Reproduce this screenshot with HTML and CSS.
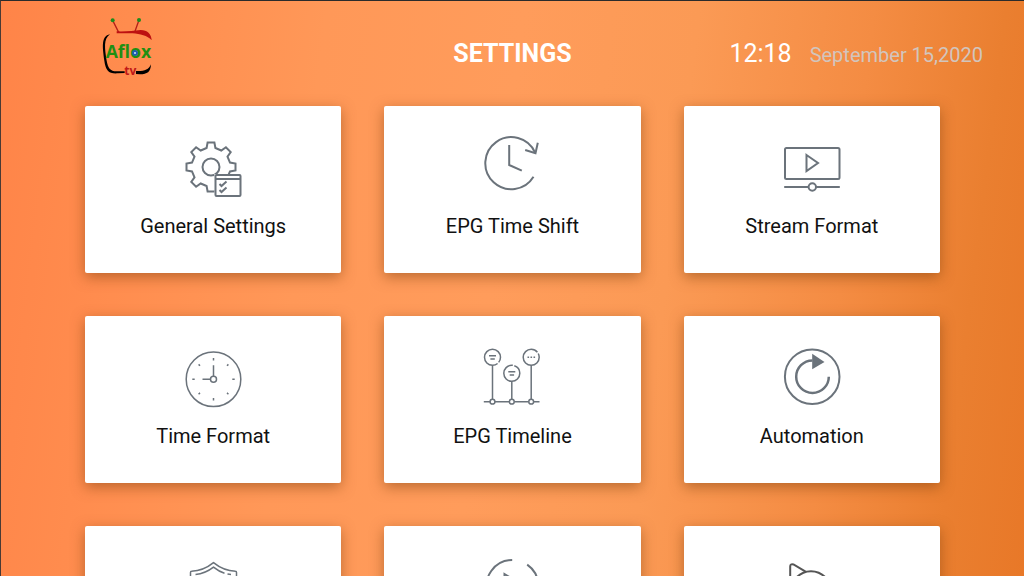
FILE: index.html
```html
<!DOCTYPE html>
<html lang="en">
<head>
    <meta charset="UTF-8">
    <meta name="viewport" content="width=device-width, initial-scale=1.0">
    <title>Settings</title>
    <link rel="stylesheet" href="styles.css">
</head>
<body>
    <header class="header">
        <svg class="logo" viewBox="0 0 240 228" role="img" aria-label="Aflox tv">
            <path d="M68 37L86 73M147 36L135 70" fill="none" stroke="#b5201a" stroke-width="4" />
            <path d="M80 70C110 71 130 68 152 66C172 66 184 78 185 97C172 82 150 78 128 76L80 76Z" fill="#bd1111" />
            <circle cx="68" cy="37" r="6" fill="#1c8c1c" />
            <circle cx="147" cy="36" r="6" fill="#1c8c1c" />
            <path d="M60 79C32 84 38 120 43 158C47 188 56 198 84 196L104 195L104 190L80 190C60 189 54 180 50 158C44 122 40 92 60 79Z" fill="#000" />
            <path d="M138 189C162 190 176 186 183 169C182 192 172 199 150 199L138 198Z" fill="#000" />
            <text class="logo-name" x="47" y="151">Aflox</text>
            <circle cx="135" cy="135" r="9" fill="#1b5fb0" />
            <circle cx="135" cy="135" r="3" fill="#cfe6ff" />
            <text class="logo-tv" x="103" y="202">tv</text>
        </svg>
        <h1 class="title">SETTINGS</h1>
        <div class="clock">
            <span class="time">12:18</span>
            <span class="date">September 15,2020</span>
        </div>
    </header>
    <main class="grid">
        <button class="card" type="button">
            <svg class="icon" viewBox="0 0 60 64">
                <g transform="translate(28 31)">
                    <path d="M-3.4-24.5H3.4L4.4-19 10.3-16.5 14.9-19.7 19.7-14.9 16.5-10.3 19-4.4 24.5-3.4V3.4L19 4.4 16.5 10.3 14.9 19.7 3.4 24.5H-3.4L-4.4 19-10.3 16.5-14.9 19.7-19.7 14.9-16.5 10.3-19 4.4-24.5 3.4V-3.4L-19-4.4-16.5-10.3-19.7-14.9-14.9-19.7-10.3-16.5-4.4-19Z" />
                    <circle r="8.5" />
                    <path class="mask" d="M3.4 7H30V30H3.4Z" />
                    <rect x="4.5" y="8" width="25" height="21" rx="1" />
                    <path d="M4.5 12H29.5" />
                    <path d="M8.5 17l2 2 5-4.5M8.5 23l2 2 5-4.5" />
                </g>
            </svg>
            <span class="label">General Settings</span>
        </button>
        <button class="card" type="button">
            <svg class="icon" viewBox="0 0 60 64">
                <path d="M51.5 40.7A26 26 0 1 1 53 16.5" />
                <path d="M43.2 14L53.5 17.3 55.8 6.7" />
                <path d="M27.2 9V29L39.8 34.7" />
            </svg>
            <span class="label">EPG Time Shift</span>
        </button>
        <button class="card" type="button">
            <svg class="icon" viewBox="0 0 60 64">
                <rect x="3" y="12" width="54.5" height="31" rx="1.5" />
                <path d="M24.5 19L36 27 24.5 35Z" />
                <path d="M2.2 51H26.5M34 51H57.8" />
                <circle cx="30.3" cy="51" r="3.7" />
            </svg>
            <span class="label">Stream Format</span>
        </button>
        <button class="card" type="button">
            <svg class="icon thin" viewBox="0 0 60 64">
                <circle cx="30.5" cy="33.3" r="27.3" />
                <circle cx="30.5" cy="33.3" r="3" />
                <path d="M30.5 30.3V19.3M27.5 33.3H19.5" />
                <path d="M30.5 12v2.4M30.5 52v2.4M9.3 33.3h2.4M49.3 33.3h2.4M15.6 18.4l1.4 1.4M44 19.8l1.4-1.4M15.6 48.2l1.4-1.4M44 46.8l1.4 1.4" />
            </svg>
            <span class="label">Time Format</span>
        </button>
        <button class="card" type="button">
            <svg class="icon thin" viewBox="0 0 60 64">
                <circle cx="10.5" cy="11.3" r="8" stroke-dasharray="48.8 1.5" stroke-dashoffset="-7" />
                <circle cx="29.8" cy="27.3" r="8" stroke-dasharray="48.8 1.5" stroke-dashoffset="-40" />
                <circle cx="49.2" cy="11.3" r="8" stroke-dasharray="48.8 1.5" stroke-dashoffset="-46" />
                <path d="M10.5 19.3V53.2M29.8 35.3V53.2M49.2 19.3V53.2" />
                <path d="M1.8 55.7H8M13 55.7H27.3M32.3 55.7H46.7M51.7 55.7H57.5" />
                <circle cx="10.5" cy="55.7" r="2.4" />
                <circle cx="29.8" cy="55.7" r="2.4" />
                <circle cx="49.2" cy="55.7" r="2.4" />
                <path d="M7 9.7H14M8.4 13H12.8M26.3 25.7H33.3M27.7 29H32.1" />
                <path d="M45.5 11.3h1.6M48.5 11.3h1.6M51.5 11.3h1.6" />
            </svg>
            <span class="label">EPG Timeline</span>
        </button>
        <button class="card" type="button">
            <svg class="icon" viewBox="0 0 60 64">
                <circle cx="30.2" cy="30.7" r="27.3" />
                <path class="bold" d="M46.8 30.7A16.3 16.3 0 1 1 30.5 14.4" />
                <path class="solid" d="M30.2 7.7L42.5 16 30.2 23.3Z" />
            </svg>
            <span class="label">Automation</span>
        </button>
        <button class="card" type="button" aria-label="Parental Control">
            <svg class="icon thin" viewBox="0 0 60 64">
                <path d="M30.5 6.7C24 12 17 15 8.5 15.2Q7.5 15.2 7.5 16.5V30C7.5 44 17 54 30.5 60C44 54 53.5 44 53.5 30V16.5Q53.5 15.2 52.5 15.2C44 15 37 12 30.5 6.7Z" />
                <path d="M41.5 17.3C37 16 34 14 30.5 11.2C25 15.5 19 18 12.5 18.5M44.5 18l3.5.6" />
            </svg>
        </button>
        <button class="card" type="button" aria-label="Player Selection">
            <svg class="icon" viewBox="0 0 60 64">
                <path d="M45.2 8.6A26 26 0 1 1 30.2 4" />
                <path d="M22.5 18L42 30 22.5 42Z" />
            </svg>
        </button>
        <button class="card" type="button" aria-label="Player Settings">
            <svg class="icon dark" viewBox="0 0 60 64">
                <path d="M8.2 50V10.5Q8.2 7.5 11.5 8.5L24 15.8" />
                <circle cx="29" cy="35.2" r="20" />
            </svg>
        </button>
    </main>
</body>
</html>
```

FILE: styles.css
```css
* {
    margin: 0;
    padding: 0;
    box-sizing: border-box;
}

html {
    scrollbar-width: none;
}

body {
    min-height: 100vh;
    border-top: 1px solid #2b2b2b;
    border-left: 1px solid #4a3a34;
    background: linear-gradient(97deg, #ff8448 0%, #ff8c4e 12%, #ff9858 30%, #ff9c5b 48%, #fb9a55 64%, #f48c43 80%, #ea7f30 92%, #e87828 100%) fixed;
    font-family: Roboto, "Liberation Sans", sans-serif;
}

.header {
    display: grid;
    grid-template-columns: 1fr auto 1fr;
    align-items: center;
    padding: 7px 41px 22px;
}

.logo {
    width: 80px;
    height: 76px;
    margin-left: 48px;
}

.logo-name {
    font: bold 53px "Open Sans", sans-serif;
    fill: #1f8f12;
}

.logo-tv {
    font: bold 36px "Open Sans", sans-serif;
    fill: #c01818;
}

.title {
    padding-top: 16px;
    font-size: 25px;
    line-height: 32px;
    color: #fff;
}

.clock {
    display: flex;
    justify-content: flex-end;
    align-items: baseline;
    gap: 18px;
    padding-top: 16px;
    line-height: 32px;
}

.time {
    font-size: 25px;
    color: #fff;
}

.date {
    font-size: 20px;
    color: #d2c5bd;
}

.grid {
    display: grid;
    grid-template-columns: repeat(3, 1fr);
    gap: 43px;
    padding: 0 84px 43px;
}

.card {
    display: flex;
    flex-direction: column;
    align-items: center;
    gap: 14px;
    min-height: 167px;
    padding: 30px 16px;
    border: none;
    border-radius: 2px;
    background: #fff;
    box-shadow: 0 4px 14px rgba(120, 60, 10, 0.5);
    font-family: inherit;
    color: #111;
    cursor: pointer;
}

.icon {
    width: 60px;
    height: 64px;
    fill: none;
    stroke: #6b737b;
    stroke-width: 2;
}

.icon.thin {
    stroke-width: 1.5;
}

.icon.dark {
    stroke: #555;
}

.icon .mask {
    fill: #fff;
    stroke: none;
}

.icon .bold {
    stroke-width: 2.5;
}

.icon .solid {
    fill: #6b737b;
    stroke: none;
}

.label {
    font-size: 20px;
    line-height: 24px;
}
```
